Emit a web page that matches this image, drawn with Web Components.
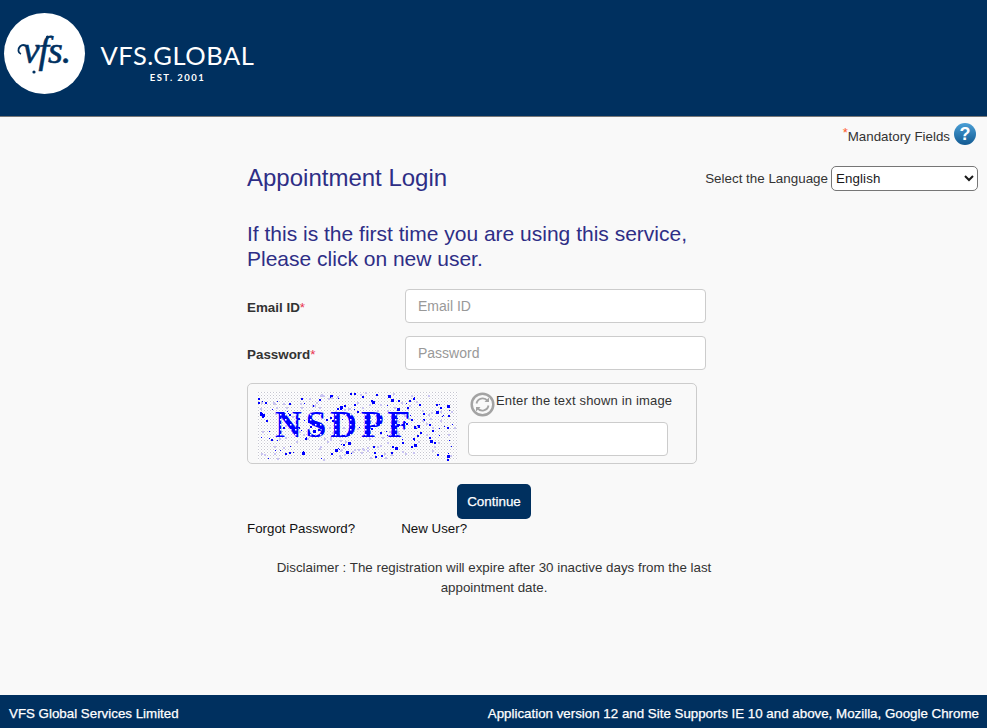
<!DOCTYPE html>
<html lang="en">
<head>
<meta charset="utf-8">
<title>Appointment Login</title>
<style>
  html, body { margin: 0; padding: 0; height: 100%; overflow: hidden; }
  body {
    font-family: "Liberation Sans", Arial, sans-serif;
    font-size: 13.33px;
    color: #333;
    background: #f9f9f9;
  }
</style>
</head>
<body>
<vfs-page>
  <vfs-header slot="header"></vfs-header>
  <mandatory-note slot="note"></mandatory-note>
  <login-panel></login-panel>
  <vfs-footer slot="footer"></vfs-footer>
</vfs-page>

<script>
(function (customElements) {

    const define = (name, html) => {
        customElements.define(name, class extends HTMLElement {
            constructor() {
                super();
                this.attachShadow({ mode: 'open' });
                const template = document.createElement('template');
                template.innerHTML = html;
                this.shadowRoot.appendChild(template.content.cloneNode(true));
            }
        });
    };

    define('vfs-page', `
  <style>
    :host { display: flex; flex-direction: column; height: 728px; }
    main { flex: 1; }
  </style>
  <slot name="header"></slot>
  <slot name="note"></slot>
  <main><slot></slot></main>
  <slot name="footer"></slot>`);

    define('vfs-header', `
  <style>
    :host {
      display: flex;
      align-items: flex-start;
      height: 116px;
      background: #00305f;
      border-bottom: 1px solid #777;
      color: #fff;
    }
    .circle {
      position: relative;
      box-sizing: border-box;
      width: 81px; height: 81px;
      margin: 13px 0 0 4px;
      padding: 0 0 7px 4px;
      border-radius: 50%;
      background: #fff;
      color: #00305f;
      display: flex; align-items: center; justify-content: center;
      font: italic 400 38px/1 "Liberation Serif", serif;
      letter-spacing: -1px;
      -webkit-text-stroke: .6px #00305f;
    }
    /* swash on the v and ball ends of the f */
    .circle svg { position: absolute; left: 0; top: 0; }
    .word { margin: 42px 0 0 15px; width: 155px; text-align: center; }
    .name { font: 400 25.5px/27px Lato, sans-serif; letter-spacing: .55px; white-space: nowrap; }
    .est { font: 700 9.5px/11px Lato, sans-serif; letter-spacing: 1.45px; margin-top: 3px; }
  </style>
  <div class="circle">vfs.
    <svg width="81" height="81" viewBox="0 0 81 81" fill="none" stroke="#00305f" stroke-width="1.800">
      <path d="M17 41c-3-1-3.500-5-1-7.500 2-2 5-1.500 7 0"/>
      <circle cx="43.500" cy="24" r="1.600" fill="#00305f" stroke="none"/>
      <circle cx="30" cy="59" r="1.600" fill="#00305f" stroke="none"/>
    </svg>
  </div>
  <div class="word">
    <div class="name">VFS.GLOBAL</div>
    <div class="est">EST. 2001</div>
  </div>`);

    define('mandatory-note', `
  <style>
    :host {
      display: flex;
      justify-content: flex-end;
      align-items: center;
      height: 33px;
      padding-right: 11px;
      font-size: 13.33px;
      color: #333;
    }
    sup { color: #ff5a2a; font-size: 13px; line-height: 0; vertical-align: 4px; }
    .text { margin-top: 6px; }
    svg { margin-left: 4px; display: block; }
  </style>
  <span class="text"><sup>*</sup>Mandatory Fields</span>
  <svg width="22" height="22" viewBox="0 0 22 22">
    <defs>
      <linearGradient id="help" x1="0" y1="0" x2="0" y2="1">
        <stop offset="0" stop-color="#4a9fd6"/>
        <stop offset="1" stop-color="#125a92"/>
      </linearGradient>
    </defs>
    <circle cx="11" cy="11" r="11" fill="url(#help)"/>
    <text x="11" y="17" text-anchor="middle" fill="#fff" font-family="Liberation Sans" font-weight="700" font-size="18">?</text>
  </svg>`);

    define('language-select', `
  <style>
    :host { display: flex; align-items: center; gap: 3px; font-size: 13.4px; color: #333; }
    select {
      width: 147px; height: 25px;
      font: 13.33px "Liberation Sans", Arial, sans-serif;
      letter-spacing: .1px;
      color: #1a1a1a;
      background: #fff;
      border: 1px solid #767676;
      border-radius: 5px;
      padding: 0;
    }
  </style>
  <span>Select the Language</span>
  <select><option>English</option></select>`);

    define('form-row', `
  <style>
    :host { display: flex; align-items: center; height: 34px; margin-bottom: 13px; }
    label { width: 158px; padding-top: 2px; font-size: 13.4px; font-weight: 700; color: #333; }
    i { color: #e8314f; font-style: normal; font-weight: 400; }
  </style>
  <label><slot name="label"></slot><i>*</i></label>
  <slot></slot>`);

    define('text-box', `
  <style>
    :host { display: block; }
    input {
      display: block;
      box-sizing: border-box;
      width: var(--box-width, 301px);
      height: var(--box-height, 34px);
      padding: 0 12px;
      font: 14px "Liberation Sans", Arial, sans-serif;
      color: #333;
      background: #fff;
      border: 1px solid #ccc;
      border-radius: 4px;
      outline: none;
    }
    input::placeholder { color: #999; opacity: 1; }
  </style>
  <input type="text">`);

    define('captcha-image', `
  <style>
    :host { display: block; width: 200px; height: 69px; }
    svg { display: block; }
    text { font: 700 37px "Liberation Serif", serif; letter-spacing: 4px; }
  </style>
  <svg width="200" height="69" viewBox="0 0 200 69">
    <defs>
      <pattern id="speck" width="3" height="3" patternUnits="userSpaceOnUse">
        <rect width="1" height="1" fill="#c6c6d0"/>
        <rect x="1.5" y="1.5" width="1" height="1" fill="#d8d8e0"/>
      </pattern>
      <pattern id="blueDots" width="5" height="5" patternUnits="userSpaceOnUse">
        <rect width="5" height="5" fill="#0000ff"/>
        <rect x="2" y="2" width="1.500" height="1.500" fill="#fff"/>
      </pattern>
    </defs>
    <rect width="200" height="69" fill="#fff"/>
    <rect width="200" height="69" fill="url(#speck)"/>
    <g class="noise"></g>
    <text x="17" y="45" fill="url(#blueDots)">NSDPF</text>
  </svg>`);

    define('captcha-box', `
  <style>
    :host {
      display: flex;
      box-sizing: border-box;
      width: 450px; height: 81px;
      padding: 8px 0 0 10px;
      border: 1px solid #ccc;
      border-radius: 5px;
    }
    .side { margin-left: 10px; --box-width: 200px; --box-height: 34px; }
    .hint { display: flex; align-items: flex-start; height: 30px; font-size: 13px; color: #333; letter-spacing: .17px; }
    .hint span { margin-top: 1px; }
    svg { display: block; margin: 0 1px 0 2px; }
  </style>
  <captcha-image></captcha-image>
  <div class="side">
    <div class="hint">
      <svg width="25" height="25" viewBox="0 0 25 25" fill="none" stroke="#a3a3a3">
        <circle cx="12.500" cy="12.500" r="10.800" stroke-width="2.500"/>
        <path d="M6.500 11.500a6.200 6.200 0 0 1 11-2.600M18.500 13.500a6.200 6.200 0 0 1-11 2.600" stroke-width="1.800"/>
        <path d="M19 5.500v4.500h-4.500zM6 19.500v-4.500h4.500z" fill="#a3a3a3" stroke="none"/>
      </svg>
      <span>Enter the text shown in image</span>
    </div>
    <text-box></text-box>
  </div>`);

    define('primary-button', `
  <style>
    :host { display: block; }
    button {
      display: block;
      width: 74px; height: 35px;
      padding: 0;
      font: 400 13.4px "Liberation Sans", Arial, sans-serif;
      -webkit-text-stroke: .25px #fff;
      color: #fff;
      background: #00305f;
      border: 0;
      border-radius: 5px;
    }
  </style>
  <button><slot></slot></button>`);

    define('login-panel', `
  <style>
    :host { display: block; padding: 0 9px 0 247px; }
    .top { display: flex; justify-content: space-between; align-items: center; height: 26px; margin-top: 15px; }
    h1 { margin: 0; font-size: 24px; font-weight: 400; color: #2e2e86; }
    h2 { margin: 30px 0 18px; font-size: 21px; line-height: 25px; font-weight: 400; color: #2e2e86; }
    .action { margin: 20px 0 0 210px; }
    .links { display: flex; gap: 46px; margin-top: 2px; font-size: 13.33px; color: #111; height: 16px; }
    .disclaimer { width: 494px; margin-top: 21px; text-align: center; font-size: 13.33px; line-height: 20px; color: #333; }
  </style>
  <div class="top">
    <h1>Appointment Login</h1>
    <language-select></language-select>
  </div>
  <h2>If this is the first time you are using this service,<br>Please click on new user.</h2>
  <form-row><span slot="label">Email ID</span><text-box data-ph="Email ID"></text-box></form-row>
  <form-row><span slot="label">Password</span><text-box data-ph="Password"></text-box></form-row>
  <captcha-box></captcha-box>
  <div class="action"><primary-button>Continue</primary-button></div>
  <div class="links"><span>Forgot Password?</span><span>New User?</span></div>
  <div class="disclaimer">Disclaimer : The registration will expire after 30 inactive days from the last appointment date.</div>`);

    define('vfs-footer', `
  <style>
    :host {
      display: flex;
      justify-content: space-between;
      align-items: center;
      height: 33px;
      padding: 3px 8px 0 9px;
      box-sizing: border-box;
      background: #00305f;
      color: #fff;
      font-size: 13.33px;
    }
    span { -webkit-text-stroke: .25px #fff; }
  </style>
  <span>VFS Global Services Limited</span>
  <span>Application version 12 and Site Supports IE 10 and above, Mozilla, Google Chrome</span>`);

    // placeholders and captcha noise go in after the elements exist
    const panel = document.querySelector('login-panel').shadowRoot;
    panel.querySelectorAll('text-box[data-ph]').forEach((box) => {
        box.shadowRoot.querySelector('input').placeholder = box.dataset.ph;
    });

    const noise = panel.querySelector('captcha-box').shadowRoot
        .querySelector('captcha-image').shadowRoot.querySelector('.noise');
    let seed = 1234;
    const rand = () => {
        seed = (seed * 16807) % 2147483647;
        return seed / 2147483647;
    };
    let dots = '';
    for (let i = 0; i < 300; i++) {
        const x = (rand() * 198).toFixed(0);
        const y = (rand() * 67).toFixed(0);
        const solid = rand() < 0.5;
        const size = solid ? 1 + Math.floor(rand() * 2.4) : 2;
        dots += `<rect x="${x}" y="${y}" width="${size}" height="${size}" fill="${solid ? '#0000ff' : '#c9c4f2'}"/>`;
    }
    noise.innerHTML = dots;

})(window.customElements);
</script>
</body>
</html>
